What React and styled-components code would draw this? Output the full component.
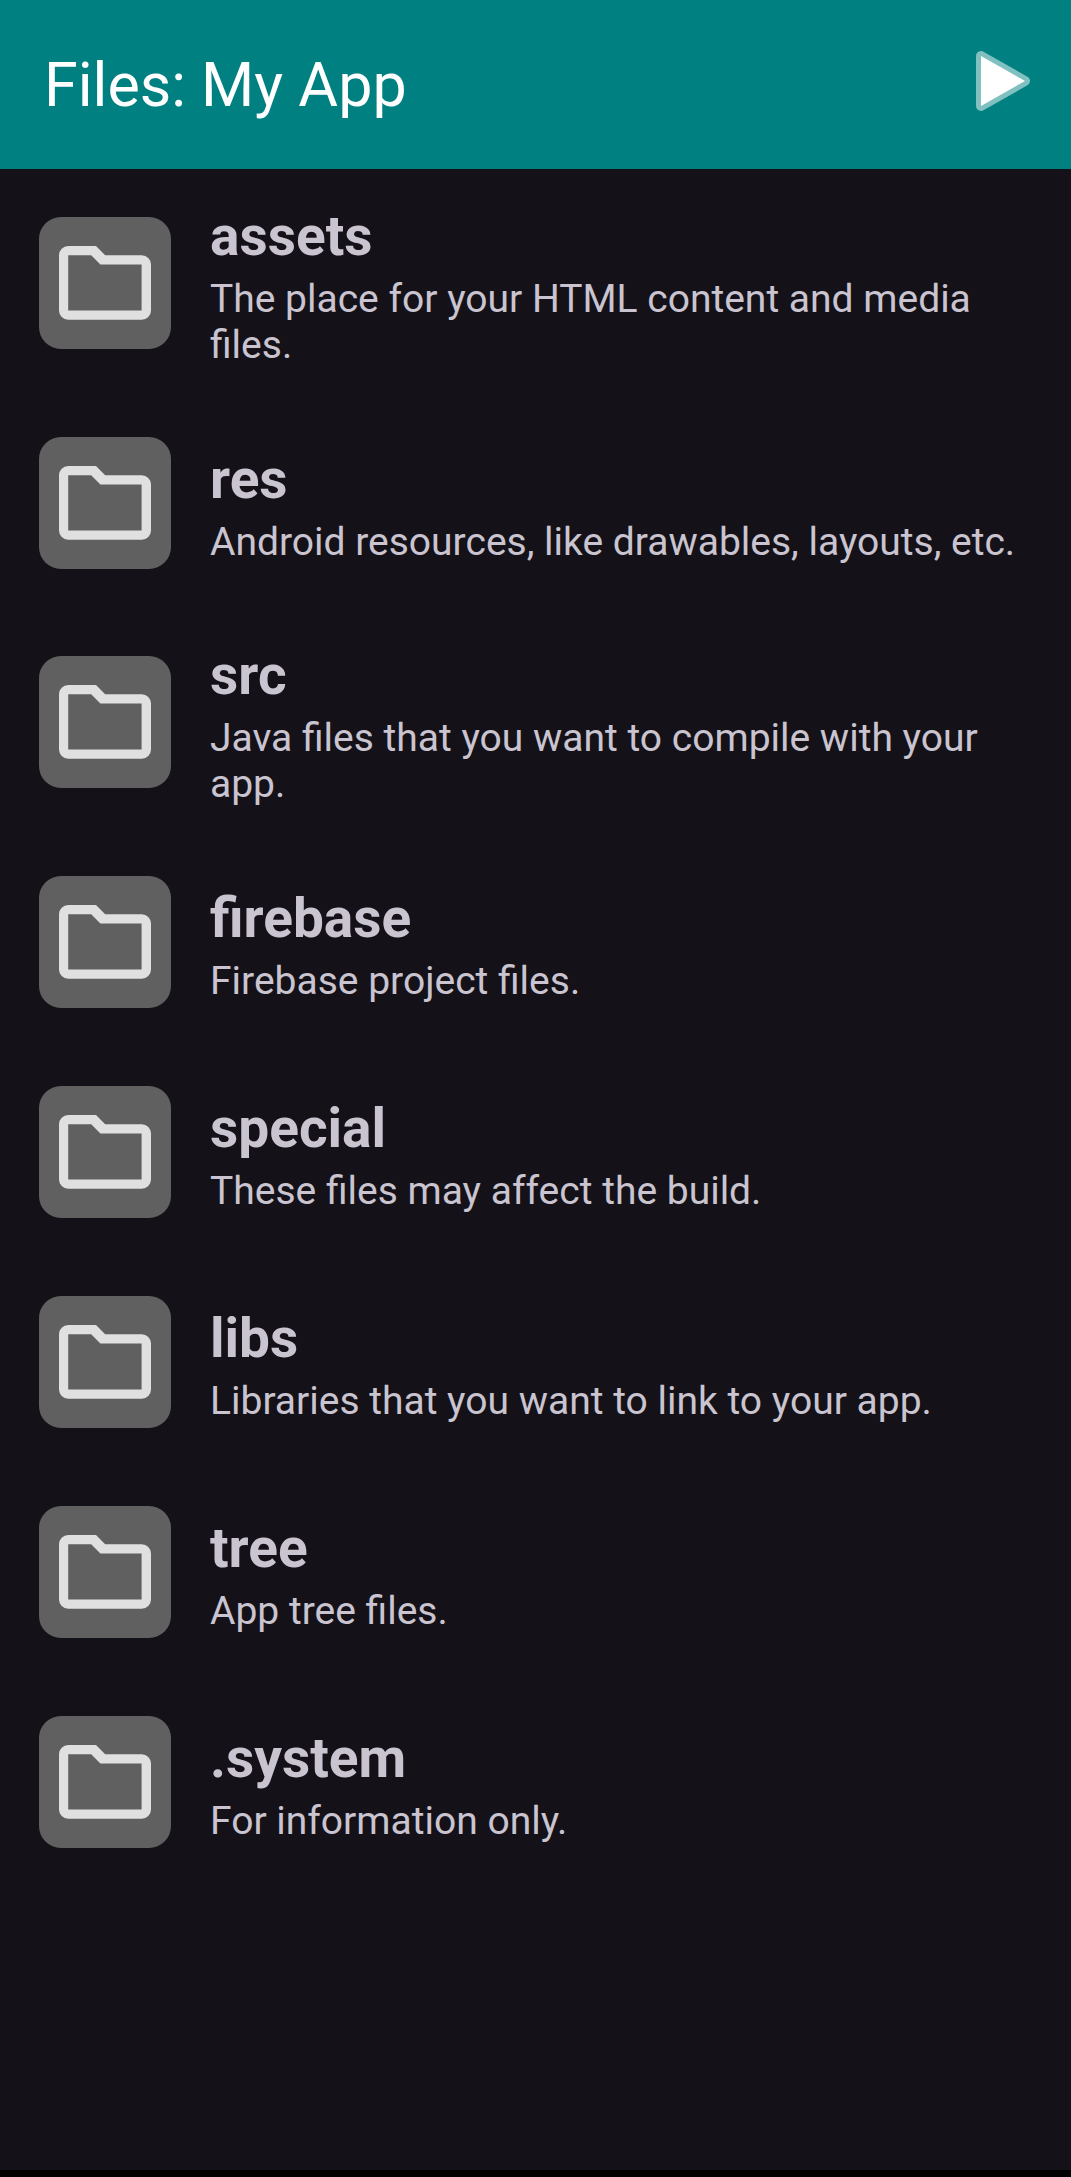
import React from "react";
import styled, { createGlobalStyle } from "styled-components";

const GlobalStyle = createGlobalStyle`
  *, *::before, *::after { box-sizing: border-box; }
  body {
    margin: 0;
    background: #141218;
    font-family: Roboto, "Liberation Sans", sans-serif;
  }
`;

const Page = styled.div`
  min-height: 100vh;
  display: flex;
  flex-direction: column;
  background: #141218;
  color: #cac4d0;
`;

const AppBar = styled.header`
  height: 169px;
  padding: 0 41px 0 44px;
  display: flex;
  align-items: center;
  justify-content: space-between;
  background: #008080;
  color: #fff;
`;

const AppTitle = styled.h1`
  margin: 0;
  font-size: 61px;
  line-height: 72px;
  font-weight: 400;
`;

const RunButton = styled.button`
  width: 64px;
  height: 64px;
  margin-bottom: 8px;
  padding: 0;
  border: 0;
  background: none;
  display: flex;
  justify-content: flex-end;
  align-items: center;
  cursor: pointer;
`;

const FolderList = styled.ul`
  flex: 1;
  margin: 0;
  padding: 0;
  list-style: none;
`;

const FolderRow = styled.a`
  display: flex;
  align-items: center;
  gap: 39px;
  min-height: 210px;
  padding: 29px 39px 30px;
  color: inherit;
  text-decoration: none;
`;

const IconTile = styled.span`
  flex: none;
  width: 132px;
  height: 132px;
  border-radius: 22px;
  background: #606060;
`;

const FolderText = styled.span`
  flex: 1;
  min-width: 0;
  display: flex;
  flex-direction: column;
  gap: 8px;
  padding-top: 6px;
`;

const FolderName = styled.span`
  font-size: 55px;
  line-height: 64px;
  font-weight: 700;
`;

const FolderDescription = styled.span`
  font-size: 39px;
  line-height: 46px;
`;

const NavigationStrip = styled.footer`
  height: 7px;
  background: #000;
`;

const folders = [
  { name: "assets", description: "The place for your HTML content and media files." },
  { name: "res", description: "Android resources, like drawables, layouts, etc." },
  { name: "src", description: "Java files that you want to compile with your app." },
  { name: "firebase", description: "Firebase project files." },
  { name: "special", description: "These files may affect the build." },
  { name: "libs", description: "Libraries that you want to link to your app." },
  { name: "tree", description: "App tree files." },
  { name: ".system", description: "For information only." },
];

function PlayIcon() {
  return (
    <svg width="54" height="60" viewBox="0 0 54 60" aria-hidden="true">
      <path d="M5 5V55L49 30Z" fill="none" stroke="#80c0c0" strokeWidth="10" strokeLinejoin="round" />
      <path d="M5 5V55L49 30Z" fill="#fff" />
    </svg>
  );
}

function FolderIcon() {
  return (
    <svg width="132" height="132" viewBox="0 0 132 132" aria-hidden="true">
      <path
        fill="#e0e0e0"
        fillRule="evenodd"
        d="M29.2 29H57L66.2 38.2H102.8A9.2 9.2 0 0 1 112 47.4V93.6A9.2 9.2 0 0 1 102.8 102.8H29.2A9.2 9.2 0 0 1 20 93.6V38.2A9.2 9.2 0 0 1 29.2 29ZM29.2 38.2V93.4H102.6V47.6H61.4L52.2 38.2Z"
      />
    </svg>
  );
}

export default function App() {
  return (
    <Page>
      <GlobalStyle />
      <AppBar>
        <AppTitle>Files: My App</AppTitle>
        <RunButton type="button" aria-label="Run">
          <PlayIcon />
        </RunButton>
      </AppBar>
      <FolderList>
        {folders.map(({ name, description }) => (
          <li key={name}>
            <FolderRow href={`#${name}`}>
              <IconTile>
                <FolderIcon />
              </IconTile>
              <FolderText>
                <FolderName>{name}</FolderName>
                <FolderDescription>{description}</FolderDescription>
              </FolderText>
            </FolderRow>
          </li>
        ))}
      </FolderList>
      <NavigationStrip />
    </Page>
  );
}
